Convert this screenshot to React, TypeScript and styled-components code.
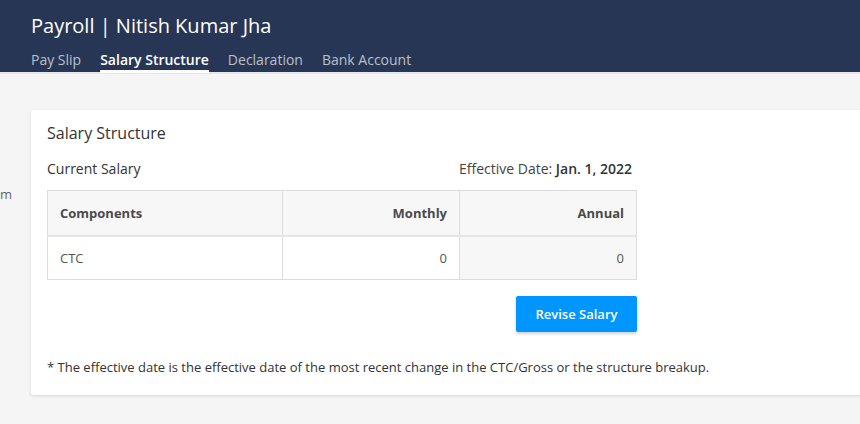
import React from "react";
import styled, { createGlobalStyle } from "styled-components";

const Global = createGlobalStyle`
  html, body { margin: 0; padding: 0; background: #f5f5f5; overflow: hidden; }
  body { font-family: "Open Sans", "Noto Sans", sans-serif; color: #333; }
  * { box-sizing: border-box; }
`;

const Header = styled.header`
  background: #283655;
  height: 74px;
  padding: 12px 31px 0;
  display: flex;
  flex-direction: column;
  border-bottom: 2px solid #e6e7ea;
`;

const Title = styled.h1`
  margin: 0;
  font-size: 20px;
  line-height: 27px;
  font-weight: 400;
  color: #fff;
`;

const Tabs = styled.nav`
  display: flex;
  gap: 19px;
  margin-top: 11px;
`;

const Tab = styled.a<{ $active?: boolean }>`
  font-size: 14px;
  line-height: 20px;
  padding-bottom: 0;
  color: ${(p) => (p.$active ? "#fff" : "#b9c0cc")};
  font-weight: ${(p) => (p.$active ? 600 : 400)};
  border-bottom: 3px solid ${(p) => (p.$active ? "#fff" : "transparent")};
`;

const Main = styled.main`
  display: flex;
  padding-top: 36px;
  height: 350px;
`;

const Gutter = styled.div`
  width: 31px;
  flex: none;
  overflow: hidden;
  font-size: 13px;
  color: #666;
  padding-top: 75px;
  line-height: 18px;
`;

const Card = styled.section`
  flex: 1;
  margin-right: -20px;
  background: #fff;
  height: 285px;
  padding: 11px 16px 16px;
  box-shadow: 0 1px 3px rgba(0, 0, 0, 0.12);
  border-radius: 2px;
`;

const CardTitle = styled.h2`
  margin: 0;
  font-size: 16px;
  line-height: 25px;
  font-weight: 500;
  color: #333;
`;

const Row = styled.div`
  width: 585px;
  display: flex;
  justify-content: space-between;
  align-items: center;
  margin-top: 13px;
  font-size: 14px;
  line-height: 20px;
`;

const Sub = styled.span`
  font-weight: 500;
  color: #333;
`;

const Eff = styled.span`
  color: #444;
  b { font-weight: 600; color: #333; }
`;

const Table = styled.table`
  margin-top: 11px;
  width: 590px;
  border-collapse: collapse;
  table-layout: fixed;
  font-size: 13px;
`;

const Th = styled.th<{ $right?: boolean }>`
  background: #f7f7f7;
  border: 1px solid #dcdcdc;
  border-bottom: 2px solid #e6e6e6;
  height: 45px;
  padding: 0 12px;
  text-align: ${(p) => (p.$right ? "right" : "left")};
  font-weight: 700;
  color: #4a4a4a;
`;

const Td = styled.td<{ $right?: boolean; $shaded?: boolean }>`
  border: 1px solid #dcdcdc;
  height: 44px;
  padding: 0 12px;
  text-align: ${(p) => (p.$right ? "right" : "left")};
  background: ${(p) => (p.$shaded ? "#f7f7f7" : "#fff")};
  color: #555;
`;

const Actions = styled.div`
  width: 590px;
  display: flex;
  justify-content: flex-end;
  margin-top: 16px;
`;

const Button = styled.button`
  width: 121px;
  height: 36px;
  border: none;
  border-radius: 2px;
  background: #0096ff;
  color: #fff;
  font-family: inherit;
  font-size: 13px;
  font-weight: 600;
  box-shadow: 0 2px 3px rgba(0, 0, 0, 0.18);
`;

const Note = styled.p`
  margin: 26px 0 0;
  font-size: 13px;
  line-height: 18px;
  color: #333;
`;

export default function App() {
  return (
    <>
      <Global />
      <Header>
        <Title>Payroll | Nitish Kumar Jha</Title>
        <Tabs>
          <Tab>Pay Slip</Tab>
          <Tab $active>Salary Structure</Tab>
          <Tab>Declaration</Tab>
          <Tab>Bank Account</Tab>
        </Tabs>
      </Header>
      <Main>
        <Gutter>m</Gutter>
        <Card>
          <CardTitle>Salary Structure</CardTitle>
          <Row>
            <Sub>Current Salary</Sub>
            <Eff>
              Effective Date: <b>Jan. 1, 2022</b>
            </Eff>
          </Row>
          <Table>
            <colgroup>
              <col style={{ width: 235 }} />
              <col style={{ width: 177 }} />
              <col style={{ width: 177 }} />
            </colgroup>
            <thead>
              <tr>
                <Th>Components</Th>
                <Th $right>Monthly</Th>
                <Th $right>Annual</Th>
              </tr>
            </thead>
            <tbody>
              <tr>
                <Td>CTC</Td>
                <Td $right>0</Td>
                <Td $right $shaded>0</Td>
              </tr>
            </tbody>
          </Table>
          <Actions>
            <Button>Revise Salary</Button>
          </Actions>
          <Note>
            * The effective date is the effective date of the most recent change in the CTC/Gross or the
            structure breakup.
          </Note>
        </Card>
      </Main>
    </>
  );
}
